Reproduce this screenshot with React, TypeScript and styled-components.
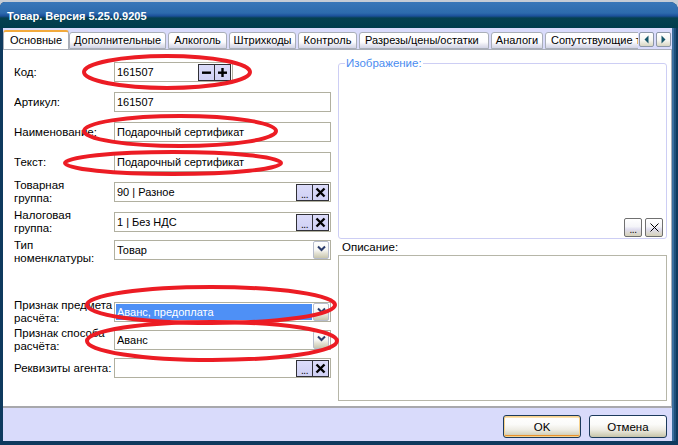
import React from "react"
import styled, { createGlobalStyle } from "styled-components"

const GlobalStyle = createGlobalStyle`
  html, body {
    margin: 0;
    padding: 0;
  }
  body {
    width: 678px;
    height: 445px;
    overflow: hidden;
    background: #c4ccd6;
    font-family: "Liberation Sans", Arial, sans-serif;
    font-size: 11px;
    color: #000;
  }
`

const Window = styled.div`
  position: relative;
  width: 678px;
  height: 443px;
  margin-top: 2px;
  display: flex;
  flex-direction: column;
  background: #0e3a5e;
  border-radius: 5px 8px 0 0;
  overflow: hidden;
`

const TitleBar = styled.div`
  height: 26px;
  flex-shrink: 0;
  display: flex;
  align-items: center;
  padding: 2px 0 0 7px;
  box-sizing: border-box;
  background: linear-gradient(#3877b9 0, #2d6bad 11px, #1b4f9a 14px, #054150 16px, #003d4c 26px);
  color: #fff;
  font-size: 11px;
  font-weight: bold;
`

const Body = styled.div`
  flex: 1;
  margin: 0 6px 4px 3px;
  display: flex;
  flex-direction: column;
  background: #d9dbfb;
  box-shadow: 2px 0 0 #3b6f9e, 4px 0 0 #1f4f7a;
`

const TabStrip = styled.div`
  height: 21px;
  flex-shrink: 0;
  display: flex;
  align-items: flex-end;
  position: relative;
  z-index: 1;
`

const Tabs = styled.div`
  flex: 1;
  display: flex;
  align-items: flex-end;
  gap: 2px;
  overflow: hidden;
  height: 21px;
`

const Tab = styled.div<{ $w: number; $active?: boolean }>`
  flex-shrink: 0;
  width: ${(p) => p.$w}px;
  height: ${(p) => (p.$active ? 20 : 17)}px;
  margin-right: ${(p) => (p.$active ? -2 : 0)}px;
  margin-bottom: ${(p) => (p.$active ? -1 : 0)}px;
  box-sizing: border-box;
  border: 1px solid #a9aeb8;
  border-bottom: ${(p) => (p.$active ? "none" : "1px solid #a9aeb8")};
  border-top: ${(p) => (p.$active ? "2px solid #f2aa3c" : "1px solid #a9aeb8")};
  border-radius: 3px 3px 0 0;
  background: ${(p) =>
    p.$active ? "#fff" : "linear-gradient(#fff 0, #fcfcfe 60%, #e6e6f0 80%, #d2d4e6 100%)"};
  display: flex;
  align-items: center;
  justify-content: ${(p) => (p.$w > 120 && !p.$active ? "flex-start" : "center")};
  padding-left: ${(p) => (p.$w > 120 ? 5 : 0)}px;
  white-space: nowrap;
  overflow: hidden;
  font-size: 11px;
  padding-bottom: ${(p) => (p.$active ? 2 : 1)}px;
`

const ScrollButtons = styled.div`
  display: flex;
  gap: 2px;
  padding: 0 1px 2px 1px;
  align-items: flex-end;
`

const ScrollButton = styled.div`
  width: 15px;
  height: 15px;
  box-sizing: border-box;
  border: 1px solid #8c96a8;
  border-radius: 2px;
  background: linear-gradient(#fff 0, #f6f6f2 55%, #d8d6c2 100%);
  display: flex;
  align-items: center;
  justify-content: center;
`

const Panel = styled.div`
  height: 359px;
  flex-shrink: 0;
  box-sizing: border-box;
  background: #fff;
  border-top: 1px solid #a9aeb8;
  border-right: 1px solid #a9aeb8;
  border-bottom: 2px solid #a8a8ac;
  display: flex;
  gap: 7px;
  padding: 12px 0 0 11px;
`

const FormColumn = styled.div`
  width: 317px;
  display: flex;
  flex-direction: column;
`

const Row = styled.div<{ $gap: number }>`
  display: flex;
  align-items: center;
  height: 20px;
  margin-top: ${(p) => p.$gap}px;
`

const Label = styled.div<{ $shift?: number }>`
  width: 100px;
  flex-shrink: 0;
  white-space: nowrap;
  overflow: hidden;
  line-height: 13px;
  font-size: 11.5px;
  margin-top: ${(p) => p.$shift ?? 0}px;
`

const Field = styled.div<{ $w?: number }>`
  width: ${(p) => p.$w ?? 217}px;
  height: 20px;
  box-sizing: border-box;
  border: 1px solid #b1b0a0;
  display: flex;
  align-items: center;
  padding: 0 1px 0 2px;
  background: #fff;
`

const FieldText = styled.span<{ $selected?: boolean }>`
  flex: 1;
  height: 16px;
  line-height: 16px;
  white-space: nowrap;
  overflow: hidden;
  font-size: 11px;
  margin-left: ${(p) => (p.$selected ? -1 : 0)}px;
  padding-left: ${(p) => (p.$selected ? 1 : 0)}px;
  margin-right: ${(p) => (p.$selected ? 1 : 0)}px;
  background: ${(p) => (p.$selected ? "#4e90f6" : "transparent")};
  color: ${(p) => (p.$selected ? "#fff" : "#000")};
`

const SquareButton = styled.div`
  width: 17px;
  height: 17px;
  box-sizing: border-box;
  border: 1px solid #303036;
  background: linear-gradient(#dcdcfa, #cfd0f4);
  display: flex;
  align-items: center;
  justify-content: center;
  font-size: 11px;
  line-height: 1;
  margin-left: -1px;
  &:first-of-type {
    margin-left: 0;
  }
`

const Dots = styled.span`
  font-size: 10px;
  line-height: 10px;
  margin-top: 5px;
  letter-spacing: -0.5px;
`

const ComboButton = styled.div`
  width: 16px;
  height: 18px;
  box-sizing: border-box;
  border: 1px solid #b6bccc;
  border-radius: 2px;
  background: linear-gradient(#fff 0, #f7f7f4 50%, #e4e2d4 70%, #c8c6ae 100%);
  display: flex;
  align-items: flex-start;
  justify-content: center;
  padding-top: 3px;
`

const SideColumn = styled.div`
  width: 329px;
  display: flex;
  flex-direction: column;
`

const ImageBox = styled.fieldset`
  margin: -6px 0 0 0;
  padding: 0 3px 1px 0;
  height: 183px;
  box-sizing: border-box;
  border: 1px solid #cdcef4;
  border-radius: 3px;
  min-inline-size: 0;
`

const ImageLegend = styled.legend`
  margin-left: 6px;
  padding: 0 1px 0 1px;
  color: #4b8cf0;
  font-size: 11.5px;
  line-height: 14px;
`

const ImageTools = styled.div`
  height: 167px;
  display: flex;
  justify-content: flex-end;
  align-items: flex-end;
  gap: 3px;
`

const ToolButton = styled.div`
  width: 18px;
  height: 19px;
  box-sizing: border-box;
  border: 1px solid #707070;
  border-radius: 2px;
  background: linear-gradient(#fff 0, #f4f4f8 45%, #e0def0 60%, #d6d2b8 100%);
  display: flex;
  align-items: center;
  justify-content: center;
  font-size: 10px;
`

const DescLabel = styled.div`
  margin: 1px 0 0 4px;
  line-height: 14px;
  height: 14px;
  font-size: 11.5px;
`

const DescArea = styled.div`
  margin-top: 1px;
  height: 146px;
  box-sizing: border-box;
  border: 1px solid #b6b6a8;
`

const Footer = styled.div`
  flex: 1;
  display: flex;
  justify-content: flex-end;
  align-items: flex-start;
  gap: 8px;
  padding: 7px 5px 0 0;
`

const XPButton = styled.div<{ $default?: boolean }>`
  width: 78px;
  height: 23px;
  box-sizing: border-box;
  border: 1px solid #1c3a5c;
  border-radius: 3px;
  background: linear-gradient(#fff 0, #fbfbf9 40%, #eeece4 65%, #d8d6c2 85%, #c6c3a8 100%);
  box-shadow: ${(p) =>
    p.$default ? "inset 0 0 0 1px #f7d28c, inset 0 -2px 0 #e8912c, inset 0 2px 0 #fbe1b0" : "none"};
  display: flex;
  align-items: center;
  justify-content: center;
  font-size: 11.5px;
`

const Marks = styled.svg`
  position: absolute;
  left: 0;
  top: -2px;
  pointer-events: none;
`

const Cross = ({ thin }: { thin?: boolean }) => (
  <svg width="11" height="11" viewBox="0 0 11 11">
    <path
      d="M1.5 1.5 L9.5 9.5 M9.5 1.5 L1.5 9.5"
      stroke="#000"
      strokeWidth={thin ? 1 : 2.4}
      fill="none"
    />
  </svg>
)

const Minus = () => (
  <svg width="11" height="11" viewBox="0 0 11 11">
    <rect x="1" y="4.5" width="9" height="2.4" fill="#000" />
  </svg>
)

const Plus = () => (
  <svg width="11" height="11" viewBox="0 0 11 11">
    <rect x="1" y="4.5" width="9" height="2.4" fill="#000" />
    <rect x="4.3" y="1" width="2.4" height="9" fill="#000" />
  </svg>
)

const Chevron = () => (
  <svg width="9" height="7" viewBox="0 0 9 7">
    <path d="M1 1.5 L4.5 5 L8 1.5" stroke="#2b3c6c" strokeWidth="2" fill="none" />
  </svg>
)

const Arrow = ({ dir }: { dir: "left" | "right" }) => (
  <svg width="7" height="9" viewBox="0 0 7 9">
    <path
      d={dir === "left" ? "M5.5 0.5 L1.5 4.5 L5.5 8.5 Z" : "M1.5 0.5 L5.5 4.5 L1.5 8.5 Z"}
      fill="#15566a"
    />
  </svg>
)

const tabs = [
  { title: "Основные", w: 66 },
  { title: "Дополнительные", w: 97 },
  { title: "Алкоголь", w: 59 },
  { title: "Штрихкоды", w: 67 },
  { title: "Контроль", w: 59 },
  { title: "Разрезы/цены/остатки", w: 130 },
  { title: "Аналоги", w: 52 },
  { title: "Сопутствующие товары", w: 130 },
]

function PickerButtons() {
  return (
    <>
      <SquareButton>
        <Dots>...</Dots>
      </SquareButton>
      <SquareButton>
        <Cross />
      </SquareButton>
    </>
  )
}

export default function App() {
  return (
    <>
      <GlobalStyle />
      <Window>
        <TitleBar>Товар. Версия 5.25.0.9205</TitleBar>
        <Body>
          <TabStrip>
            <Tabs>
              {tabs.map((t, i) => (
                <Tab key={t.title} $w={t.w} $active={i === 0}>
                  {t.title}
                </Tab>
              ))}
            </Tabs>
            <ScrollButtons>
              <ScrollButton>
                <Arrow dir="left" />
              </ScrollButton>
              <ScrollButton>
                <Arrow dir="right" />
              </ScrollButton>
            </ScrollButtons>
          </TabStrip>
          <Panel>
            <FormColumn>
              <Row $gap={0}>
                <Label>Код:</Label>
                <Field $w={119}>
                  <FieldText>161507</FieldText>
                  <SquareButton>
                    <Minus />
                  </SquareButton>
                  <SquareButton>
                    <Plus />
                  </SquareButton>
                </Field>
              </Row>
              <Row $gap={10}>
                <Label>Артикул:</Label>
                <Field>
                  <FieldText>161507</FieldText>
                </Field>
              </Row>
              <Row $gap={10}>
                <Label>Наименование:</Label>
                <Field>
                  <FieldText>Подарочный сертификат</FieldText>
                </Field>
              </Row>
              <Row $gap={10}>
                <Label>Текст:</Label>
                <Field>
                  <FieldText>Подарочный сертификат</FieldText>
                </Field>
              </Row>
              <Row $gap={10}>
                <Label>
                  Товарная
                  <br />
                  группа:
                </Label>
                <Field>
                  <FieldText>90 | Разное</FieldText>
                  <PickerButtons />
                </Field>
              </Row>
              <Row $gap={10}>
                <Label>
                  Налоговая
                  <br />
                  группа:
                </Label>
                <Field>
                  <FieldText>1 | Без НДС</FieldText>
                  <PickerButtons />
                </Field>
              </Row>
              <Row $gap={8}>
                <Label $shift={3}>
                  Тип
                  <br />
                  номенклатуры:
                </Label>
                <Field>
                  <FieldText>Товар</FieldText>
                  <ComboButton>
                    <Chevron />
                  </ComboButton>
                </Field>
              </Row>
              <Row $gap={42}>
                <Label>
                  Признак предмета
                  <br />
                  расчёта:
                </Label>
                <Field>
                  <FieldText $selected>Аванс, предоплата</FieldText>
                  <ComboButton>
                    <Chevron />
                  </ComboButton>
                </Field>
              </Row>
              <Row $gap={8}>
                <Label>
                  Признак способа
                  <br />
                  расчёта:
                </Label>
                <Field>
                  <FieldText>Аванс</FieldText>
                  <ComboButton>
                    <Chevron />
                  </ComboButton>
                </Field>
              </Row>
              <Row $gap={8}>
                <Label>Реквизиты агента:</Label>
                <Field>
                  <FieldText />
                  <PickerButtons />
                </Field>
              </Row>
            </FormColumn>
            <SideColumn>
              <ImageBox>
                <ImageLegend>Изображение:</ImageLegend>
                <ImageTools>
                  <ToolButton>
                    <Dots>...</Dots>
                  </ToolButton>
                  <ToolButton>
                    <Cross thin />
                  </ToolButton>
                </ImageTools>
              </ImageBox>
              <DescLabel>Описание:</DescLabel>
              <DescArea />
            </SideColumn>
          </Panel>
          <Footer>
            <XPButton $default>OK</XPButton>
            <XPButton>Отмена</XPButton>
          </Footer>
        </Body>
        <Marks width="678" height="445" viewBox="0 0 678 445">
          <g fill="none" stroke="#ec1c24" strokeWidth="4">
            <ellipse cx="167" cy="72" rx="83" ry="16" />
            <ellipse cx="180" cy="131" rx="96" ry="15" />
            <ellipse cx="173" cy="163" rx="108" ry="11" />
            <ellipse cx="211" cy="305" rx="124" ry="18" />
            <ellipse cx="212" cy="341" rx="125" ry="19" />
          </g>
        </Marks>
      </Window>
    </>
  )
}
